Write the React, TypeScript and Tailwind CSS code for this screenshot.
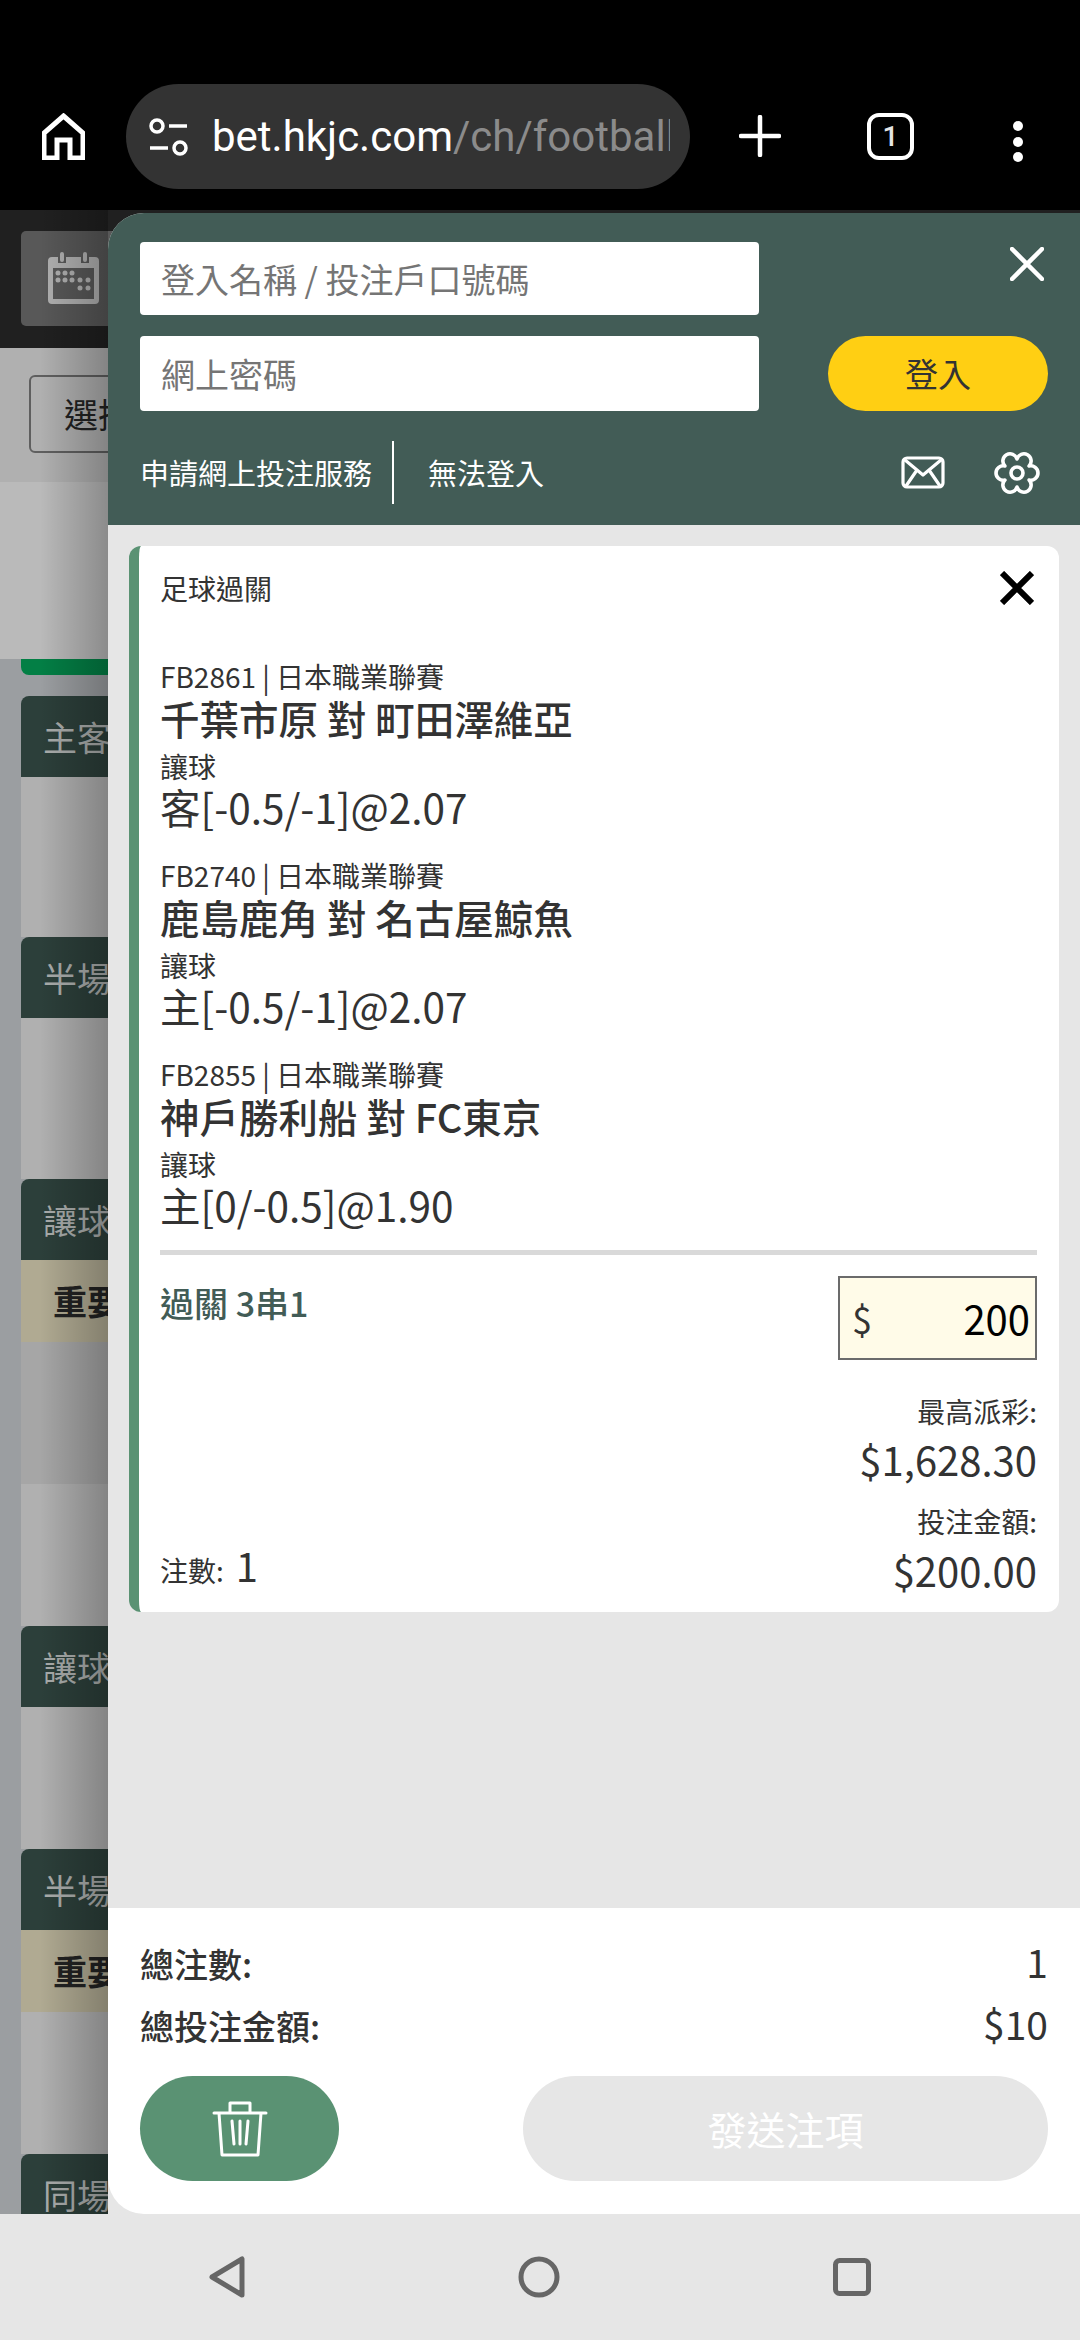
import React from 'react';

const FONT = { fontFamily: '"Noto Sans CJK TC", "Noto Sans", sans-serif' };

const bets = [
  { no: 'FB2861', match: '千葉市原 對 町田澤維亞', pick: '客[-0.5/-1]@2.07' },
  { no: 'FB2740', match: '鹿島鹿角 對 名古屋鯨魚', pick: '主[-0.5/-1]@2.07' },
  { no: 'FB2855', match: '神戶勝利船 對 FC東京', pick: '主[0/-0.5]@1.90' },
];

const sectionRow = 'h-[81px] rounded-t-[8px] bg-[#2c3f3a] text-[#a9acab] text-[34px] leading-[81px] pl-[22px] whitespace-nowrap overflow-hidden';
const noticeRow = 'h-[82px] bg-[#b0aa92] text-[#222] font-bold text-[34px] leading-[82px] pl-[32px] whitespace-nowrap overflow-hidden';

function BrowserBar() {
  return (
    <div className="h-[210px] shrink-0 bg-black flex items-start pt-[84px] pl-[42px]">
      <svg width="43" height="47" viewBox="0 0 43 47" className="mt-[29px]" fill="none" stroke="white" strokeWidth="5">
        <path d="M21.5 3 L41 20 V45 H28 V27 H15 V45 H2 V20 Z" />
      </svg>
      <div className="ml-[41px] w-[564px] h-[105px] rounded-full bg-[#333] flex items-center pl-[23px] overflow-hidden">
        <svg width="40" height="38" viewBox="0 0 40 38" fill="none" stroke="white" strokeWidth="3.5" className="shrink-0">
          <circle cx="8" cy="8" r="6" />
          <path d="M20 8 H38 M1 30 H19" />
          <circle cx="31" cy="30" r="6" />
        </svg>
        <div className="ml-[23px] w-[458px] overflow-hidden whitespace-nowrap text-[42px] text-white" style={{ fontFamily: 'Roboto, sans-serif' }}>
          bet.hkjc.com<span className="text-[#8b8b8b]">/ch/football</span>
        </div>
      </div>
      <svg width="42" height="42" viewBox="0 0 42 42" className="ml-[49px] mt-[31px]" stroke="white" strokeWidth="4.5" strokeLinecap="round">
        <path d="M21 2 V40 M2 21 H40" />
      </svg>
      <div className="ml-[86px] mt-[29px] w-[47px] h-[47px] rounded-[12px] border-[4.5px] border-white flex items-center justify-center text-[#e5e5e5] text-[28px] font-medium leading-none" style={{ fontFamily: 'Roboto, sans-serif' }}>1</div>
      <div className="ml-[99px] mt-[37px] flex flex-col gap-[5.5px]">
        <div className="size-[10px] rounded-full bg-white" />
        <div className="size-[10px] rounded-full bg-white" />
        <div className="size-[10px] rounded-full bg-white" />
      </div>
    </div>
  );
}

function Backdrop() {
  return (
    <div className="absolute inset-0 bg-[#9b9ea1] overflow-hidden">
      <div className="h-[138px] bg-[#202020] pt-[21px] pl-[21px]">
        <div className="w-[120px] h-[95px] rounded-[5px] bg-[#585858] pl-[26px] pt-[21px]">
          <svg width="53" height="54" viewBox="0 0 53 54" fill="#b0b0b0">
            <path fillRule="evenodd" d="M5 5 H11 V11 H19 V5 H34 V11 H42 V5 H48 a4 4 0 0 1 4 4 V48 a4 4 0 0 1 -4 4 H5 a4 4 0 0 1 -4 -4 V9 a4 4 0 0 1 4 -4 Z M6 16 V47 H47 V16 Z" />
            <rect x="13" y="0" width="4" height="10" rx="2" />
            <rect x="36" y="0" width="4" height="10" rx="2" />
            <circle cx="11" cy="21" r="2.5" /><circle cx="18" cy="21" r="2.5" /><circle cx="25" cy="21" r="2.5" />
            <circle cx="11" cy="28" r="2.5" /><circle cx="18" cy="28" r="2.5" /><circle cx="25" cy="28" r="2.5" /><circle cx="33" cy="28" r="2.5" /><circle cx="41" cy="28" r="2.5" />
            <circle cx="33" cy="36" r="2.5" /><circle cx="41" cy="36" r="2.5" />
          </svg>
        </div>
      </div>
      <div className="h-[134px] bg-[#b0b0b0] pt-[27px] pl-[29px]">
        <div className="w-[200px] h-[78px] rounded-[6px] border-2 border-[#5f5f5f] text-[#222] text-[34px] leading-[74px] pl-[33px]">選擇</div>
      </div>
      <div className="h-[177px] bg-[#bababa]" />
      <div className="pl-[21px]">
        <div className="h-[16px] rounded-b-[8px] bg-[#037f45]" />
        <div className="h-[21px]" />
        <div className={sectionRow}>主客和</div>
        <div className="h-[160px] bg-[#b0b0b0]" />
        <div className={sectionRow}>半場主客和</div>
        <div className="h-[161px] bg-[#b0b0b0]" />
        <div className={sectionRow}>讓球</div>
        <div className={noticeRow}>重要提示</div>
        <div className="h-[142px] bg-[#a6a6a6]" />
        <div className="h-[142px] bg-[#b0b0b0]" />
        <div className={sectionRow}>讓球主客和</div>
        <div className="h-[142px] bg-[#b0b0b0]" />
        <div className={sectionRow}>半場讓球</div>
        <div className={noticeRow}>重要提示</div>
        <div className="h-[142px] bg-[#b0b0b0]" />
        <div className={sectionRow}>同場過關</div>
      </div>
      <div className="absolute top-0 bottom-0 left-[40px] w-[68px] bg-gradient-to-r from-transparent to-black/25" />
    </div>
  );
}

function LoginHeader() {
  return (
    <div className="h-[312px] shrink-0 bg-[#425c56] px-[32px] pt-[29px]">
      <div className="flex">
        <div className="w-[619px] flex flex-col gap-[21px]">
          <div className="h-[73px] rounded-[4px] bg-white text-[#757575] text-[34px] leading-[73px] pl-[21px]">登入名稱 / 投注戶口號碼</div>
          <div className="h-[75px] rounded-[4px] bg-white text-[#757575] text-[34px] leading-[75px] pl-[21px]">網上密碼</div>
        </div>
        <div className="flex-1 flex flex-col items-end justify-between">
          <svg width="34" height="34" viewBox="0 0 34 34" className="mt-[5px] mr-[4px]" stroke="white" strokeWidth="4.5" strokeLinecap="round">
            <path d="M2 2 L32 32 M32 2 L2 32" />
          </svg>
          <div className="w-[220px] h-[75px] rounded-full bg-[#ffcf13] text-[#333] text-[33px] leading-[75px] text-center">登入</div>
        </div>
      </div>
      <div className="flex items-center mt-[30px] h-[63px] text-white text-[29px]">
        <span>申請網上投注服務</span>
        <div className="w-[2px] h-[63px] bg-white ml-[20px]" />
        <span className="ml-[34px]">無法登入</span>
        <div className="ml-auto mr-[7px] flex items-center gap-[48px]">
          <svg width="44" height="33" viewBox="0 0 44 33" fill="none" stroke="white" strokeWidth="3.2" strokeLinejoin="round">
            <rect x="2" y="2" width="40" height="29" rx="4" />
            <path d="M4 4 L22 19 L40 4 M5 30 L16 14 M39 30 L28 14" />
          </svg>
          <svg width="48" height="44" viewBox="0 0 48 44" fill="none" stroke="white" strokeWidth="3.6" strokeLinejoin="round">
            <path d="M24 8 A7.2 7.2 0 1 1 36.1 15 A7.2 7.2 0 1 1 36.1 29 A7.2 7.2 0 1 1 24 36 A7.2 7.2 0 1 1 11.9 29 A7.2 7.2 0 1 1 11.9 15 A7.2 7.2 0 1 1 24 8 Z" />
            <circle cx="24" cy="22" r="6" />
          </svg>
        </div>
      </div>
    </div>
  );
}

function BetCard() {
  return (
    <div className="rounded-[12px] bg-white border-l-[10px] border-[#5a9273] pl-[21px] pr-[22px] pb-[13px] text-[#333] overflow-hidden">
      <div className="pt-[25px] flex items-center justify-between">
        <span className="text-[28px] leading-[34px]">足球過關</span>
        <svg width="34" height="34" viewBox="0 0 34 34" className="mr-[3px]" stroke="black" strokeWidth="6">
          <path d="M2 2 L32 32 M32 2 L2 32" />
        </svg>
      </div>
      <div className="mt-[55px] flex flex-col gap-[25px]">
        {bets.map((bet) => (
          <div key={bet.no} className="h-[174px]">
            <div className="text-[28px] leading-[32px]">{bet.no} | 日本職業聯賽</div>
            <div className="text-[39.5px] leading-[52px] font-medium">{bet.match}</div>
            <div className="text-[28px] leading-[44px]">讓球</div>
            <div className="text-[40.5px] leading-[38px]">{bet.pick}</div>
          </div>
        ))}
      </div>
      <div className="mt-[18px] h-[5px] bg-[#d9d9d9]" />
      <div className="mt-[21px] flex justify-between items-start">
        <span className="text-[#425c56] text-[34px] font-medium leading-[54px]">過關 3串1</span>
        <div className="w-[199px] h-[84px] border-2 border-[#6b6b6b] bg-[#fffbe8] flex items-center justify-between pl-[12px] pr-[5px]">
          <span className="text-[36px] text-[#333] leading-none">$</span>
          <span className="text-[40px] text-black leading-none">200</span>
        </div>
      </div>
      <div className="flex justify-between items-end mt-[31px]">
        <div className="flex items-baseline gap-[12px] mb-[4px] leading-[50px]">
          <span className="text-[28px]">注數:</span>
          <span className="text-[40px]">1</span>
        </div>
        <div className="text-right pb-[14px]">
          <div className="text-[28px] leading-[40px]">最高派彩:</div>
          <div className="text-[40px] leading-[56px]">$1,628.30</div>
          <div className="text-[28px] leading-[68px]">投注金額:</div>
          <div className="text-[40px] leading-[30px]">$200.00</div>
        </div>
      </div>
    </div>
  );
}

function Summary() {
  return (
    <div className="h-[306px] shrink-0 bg-white px-[32px] pt-[24px] rounded-bl-[36px] text-[#333]">
      <div className="flex justify-between items-center h-[62px]">
        <span className="text-[34px] font-medium">總注數:</span>
        <span className="text-[39px] -mt-[4px]">1</span>
      </div>
      <div className="flex justify-between items-center h-[62px]">
        <span className="text-[34px] font-medium">總投注金額:</span>
        <span className="text-[39px] -mt-[4px]">$10</span>
      </div>
      <div className="flex justify-between items-center mt-[20px]">
        <div className="w-[199px] h-[105px] rounded-full bg-[#5a9273] flex items-center justify-center">
          <svg width="56" height="56" viewBox="0 0 56 56" fill="none" stroke="white" strokeWidth="3" strokeLinejoin="round" strokeLinecap="round">
            <path d="M2 12 H54 M18 11 V2 H38 V11 M7 12 L10 54 H46 L49 12 M20 20 L22 43 M28 20 V43 M36 20 L34 43" />
          </svg>
        </div>
        <div className="w-[525px] h-[105px] rounded-full bg-[#e6e6e6] flex items-center justify-center text-white text-[39px]">發送注項</div>
      </div>
    </div>
  );
}

function NavBar() {
  return (
    <div className="h-[126px] shrink-0 bg-[#e6e6e6] relative z-10 flex items-center justify-center gap-[273px]">
      <svg width="36" height="42" viewBox="0 0 36 42" fill="none" stroke="#666" strokeWidth="5" strokeLinejoin="round"><path d="M33 3 V39 L3 21 Z" /></svg>
      <svg width="42" height="42" viewBox="0 0 42 42" fill="none" stroke="#666" strokeWidth="5"><circle cx="21" cy="21" r="18" /></svg>
      <svg width="38" height="38" viewBox="0 0 38 38" fill="none" stroke="#666" strokeWidth="5"><rect x="2.5" y="2.5" width="33" height="33" rx="4" /></svg>
    </div>
  );
}

export default function App() {
  return (
    <div className="w-[1080px] h-[2340px] flex flex-col overflow-hidden" style={FONT}>
      <BrowserBar />
      <div className="flex-1 relative overflow-hidden">
        <Backdrop />
        <div className="absolute left-[108px] right-0 top-[3px] bottom-0 rounded-tl-[36px] overflow-hidden flex flex-col bg-[#e6e6e6]">
          <LoginHeader />
          <div className="flex-1 px-[21px] pt-[21px]">
            <BetCard />
          </div>
          <Summary />
        </div>
      </div>
      <NavBar />
    </div>
  );
}
